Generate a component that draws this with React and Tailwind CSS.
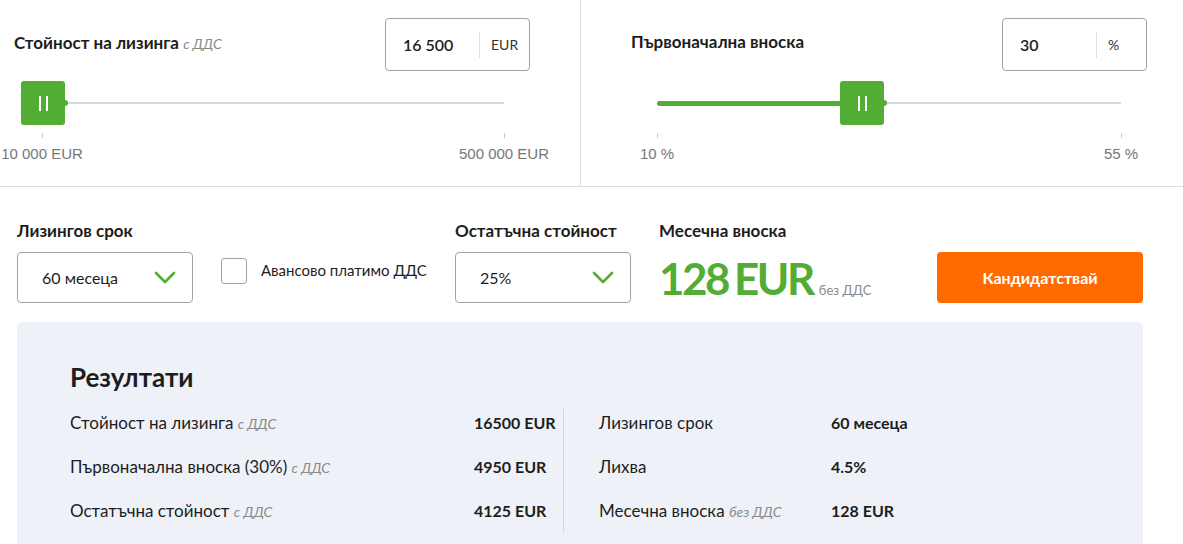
import React from 'react';

const GREEN = '#53ac33';

const Chevron = () => (
  <svg width="22" height="14" viewBox="0 0 22 14" fill="none">
    <polyline points="2,2 11,11 20,2" stroke={GREEN} strokeWidth="2.6" strokeLinecap="round" strokeLinejoin="round" />
  </svg>
);

const Thumb = ({ left }) => (
  <div className="absolute top-0 h-[44px] w-[44px]" style={{ left }}>
    <div className="flex h-full w-full items-center justify-center gap-[5px] rounded-[3px] bg-[#53ac33]">
      <span className="h-[15px] w-[2px] bg-white" />
      <span className="h-[15px] w-[2px] bg-white" />
    </div>
    <span className="absolute right-[-3px] top-[19px] h-[6px] w-[6px] rounded-full bg-[#53ac33]" />
  </div>
);

const Slider = ({ width, fill, thumb, min, max }) => (
  <div style={{ width }}>
    <div className="relative h-[44px]">
      <div className="absolute left-0 right-0 top-[21px] h-[2px] bg-[#d6d9e0]" />
      {fill > 0 && (
        <div className="absolute left-0 top-[20px] h-[5px] rounded-full bg-[#53ac33]" style={{ width: fill }} />
      )}
      <Thumb left={thumb} />
    </div>
    <div className="mt-[8px] flex justify-between font-['Liberation_Sans',Arial,sans-serif] text-[15px] text-[#777]">
      <div className="flex w-0 flex-col items-center">
        <span className="h-[5px] w-px bg-[#c9c9c9]" />
        <span className="mt-[5px] whitespace-nowrap">{min}</span>
      </div>
      <div className="flex w-0 flex-col items-center">
        <span className="h-[5px] w-px bg-[#c9c9c9]" />
        <span className="mt-[5px] whitespace-nowrap">{max}</span>
      </div>
    </div>
  </div>
);

const ValueBox = ({ value, unit }) => (
  <div className="flex h-[53px] w-[145px] items-center rounded-[4px] border border-[#a3a3a3]">
    <span className="w-[93px] pl-[17px] text-[16px] font-semibold">{value}</span>
    <span className="h-[26px] w-px bg-[#e2e2e2]" />
    <span className="flex-1 pl-[11px] text-[14px] text-[#333]">{unit}</span>
  </div>
);

const Select = ({ value }) => (
  <div className="flex h-[51px] w-[176px] items-center justify-between rounded-[4px] border border-[#a3a3a3] pl-[24px] pr-[16px]">
    <span className="text-[16px]">{value}</span>
    <Chevron />
  </div>
);

const Note = ({ children }) => (
  <span className="text-[14px] font-normal italic text-[#8a8a8a]">{children}</span>
);

const leftRows = [
  ['Стойност на лизинга', 'с ДДС', '16500 EUR'],
  ['Първоначална вноска (30%)', 'с ДДС', '4950 EUR'],
  ['Остатъчна стойност', 'с ДДС', '4125 EUR'],
];

const rightRows = [
  ['Лизингов срок', null, '60 месеца'],
  ['Лихва', null, '4.5%'],
  ['Месечна вноска', 'без ДДС', '128 EUR'],
];

export default function App() {
  return (
    <div className="h-[544px] w-[1183px] overflow-hidden bg-white font-['Lato','Roboto',sans-serif] text-[#1d1d1d]">
      {/* sliders */}
      <div className="flex h-[187px] border-b border-[#dedede]">
        <div className="w-[581px] border-r border-[#dedede] pt-[18px]">
          <div className="flex items-start justify-between pl-[14px] pr-[50px]">
            <div className="mt-[12px] text-[17px] font-bold">
              Стойност на лизинга <Note>с ДДС</Note>
            </div>
            <ValueBox value="16 500" unit="EUR" />
          </div>
          <div className="ml-[42px] mt-[10px]">
            <Slider width={462} fill={0} thumb={-21} min="10 000 EUR" max="500 000 EUR" />
          </div>
        </div>
        <div className="flex-1 pt-[18px]">
          <div className="flex items-start justify-between pl-[50px] pr-[36px]">
            <div className="mt-[11px] text-[17px] font-bold">Първоначална вноска</div>
            <ValueBox value="30" unit="%" />
          </div>
          <div className="ml-[76px] mt-[10px]">
            <Slider width={464} fill={194} thumb={183} min="10 %" max="55 %" />
          </div>
        </div>
      </div>

      {/* options */}
      <div className="flex items-start pl-[17px] pt-[33px]">
        <div className="flex flex-col gap-[10px]">
          <div className="h-[22px] text-[17px] font-bold leading-[22px]">Лизингов срок</div>
          <Select value="60 месеца" />
        </div>
        <label className="ml-[28px] mt-[38px] flex w-[234px] items-center gap-[14px]">
          <span className="h-[26px] w-[26px] shrink-0 rounded-[3px] border border-[#a3a3a3] bg-white" />
          <span className="-mt-[2px] whitespace-nowrap text-[15px]">Авансово платимо ДДС</span>
        </label>
        <div className="flex flex-col gap-[10px]">
          <div className="h-[22px] text-[17px] font-bold leading-[22px]">Остатъчна стойност</div>
          <Select value="25%" />
        </div>
        <div className="ml-[28px] flex flex-col gap-[10px]">
          <div className="h-[22px] text-[17px] font-bold leading-[22px]">Месечна вноска</div>
          <div className="flex items-baseline pt-[4px]">
            <span className="text-[44px] font-bold leading-[44px] tracking-[-2.5px] text-[#53ac33]">128</span>
            <span className="ml-[6px] text-[44px] font-bold leading-[44px] tracking-[-2.5px] text-[#53ac33]">EUR</span>
            <span className="ml-[6px] text-[13px] text-[#8a8a8a]">без ДДС</span>
          </div>
        </div>
        <button className="ml-auto mr-[40px] mt-[32px] h-[51px] w-[206px] rounded-[4px] bg-[#ff6b00] text-[16px] font-bold text-white">
          Кандидатствай
        </button>
      </div>

      {/* results */}
      <div className="ml-[17px] mt-[19px] w-[1126px] rounded-t-[6px] bg-[#eef2f8] pb-[20px] pl-[53px] pt-[40px]">
        <h2 className="text-[26px] font-bold leading-[30px]">Резултати</h2>
        <div className="mt-[9px] flex">
          <div className="w-[486px]">
            {leftRows.map(([label, note, value]) => (
              <div key={label} className="flex h-[44px] items-center text-[17px]">
                <span className="w-[404px]">
                  {label} <Note>{note}</Note>
                </span>
                <span className="text-[16px] font-bold">{value}</span>
              </div>
            ))}
          </div>
          <div className="ml-[7px] mt-[8px] w-px bg-[#d3d6dc]" />
          <div className="ml-[35px]">
            {rightRows.map(([label, note, value]) => (
              <div key={label} className="flex h-[44px] items-center text-[17px]">
                <span className="w-[232px]">
                  {label} {note && <Note>{note}</Note>}
                </span>
                <span className="text-[16px] font-bold">{value}</span>
              </div>
            ))}
          </div>
        </div>
      </div>
    </div>
  );
}
